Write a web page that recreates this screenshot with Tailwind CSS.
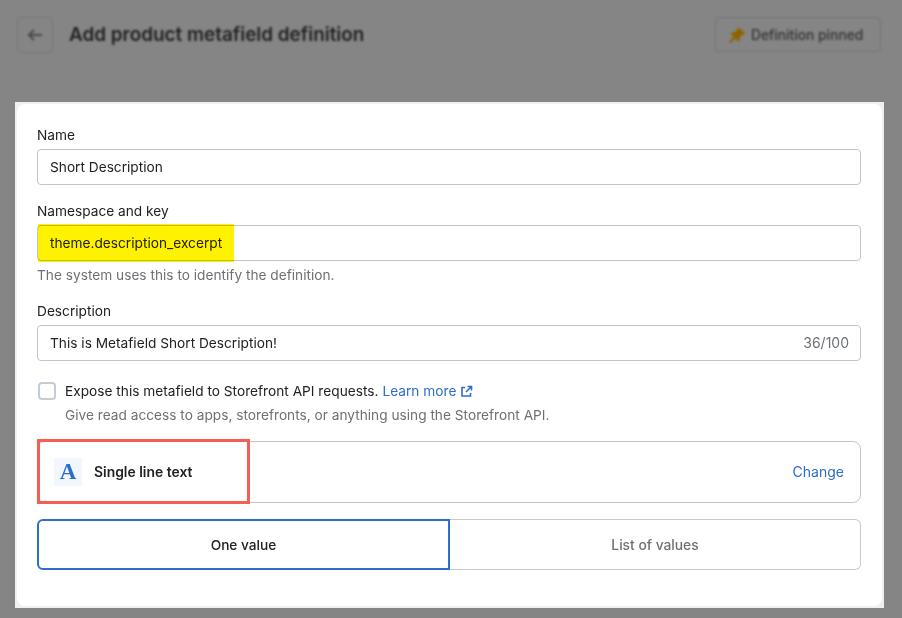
<!DOCTYPE html>
<html lang="en"><head><meta charset="utf-8"><script src="https://cdn.jsdelivr.net/npm/@tailwindcss/browser@4"></script><title>Add product metafield definition</title></head>
<body class="m-0 w-[902px] h-[618px] overflow-hidden bg-[#858585] font-['Inter','Liberation_Sans',sans-serif] text-[13.7px] leading-[20px] text-[#202223]">
<header class="h-[102px] pl-[17px] pr-[21px] pt-[16px] flex items-start justify-between blur-[1px]">
  <div class="flex items-center gap-[16px]">
    <div class="w-[36px] h-[36px] border border-[#777] rounded-[4px] flex items-center justify-center">
      <svg width="20" height="20" viewBox="0 0 20 20" fill="none" stroke="#4a4a4a" stroke-width="2"><path d="M17 10H4M9 5l-5 5 5 5"/></svg>
    </div>
    <h1 class="text-[18.9px] font-semibold text-[#222] leading-[36px] pt-[1px]">Add product metafield definition</h1>
  </div>
  <div class="mt-[1px] w-[166px] h-[35px] border border-[#757575] rounded-[4px] flex items-center gap-[4px] pl-[11px] text-[13.8px] font-medium text-[#333]">
    <svg width="20" height="20" viewBox="0 0 20 20" fill="#8f6200"><path d="M12 3l6 5-1 1.500-2 .2-2.500 3.500.3 2-1.500 1.300-3-3L3.500 18 2 17l4.500-5.500-3-2.800 1.500-1.500 2.200.3L10.500 4.500V3z"/></svg>
    <span>Definition pinned</span>
  </div>
</header>
<main class="relative ml-[15px] w-[869px] h-[506px] bg-[#f0f0f0] pt-[2px] pl-[2px] pr-[2px]">
  <div class="bg-white rounded-[8px] h-[502px] pl-[20px] pr-[21px] pt-[21px]">
    <label class="block h-[24px]">Name</label>
    <div class="h-[36px] border border-[#c4c4c4] rounded-[4px] px-[12px] flex items-center">Short Description</div>
    <label class="block h-[26px] mt-[14px] pt-[2px] leading-[20px]">Namespace and key</label>
    <div class="h-[36px] border border-[#c4c4c4] rounded-[4px] px-[12px] flex items-center">theme.description_excerpt</div>
    <p class="mt-[4px] h-[20px] text-[#6d7175]">The system uses this to identify the definition.</p>
    <label class="block h-[28px] mt-[12px] pt-[4px]">Description</label>
    <div class="h-[36px] border border-[#c4c4c4] rounded-[4px] pl-[12px] pr-[11px] flex items-center justify-between"><span>This is Metafield Short Description!</span><span class="text-[#6d7175] text-[14px]">36/100</span></div>
    <div class="mt-[20px] flex items-start gap-[9px]">
      <div class="ml-[1px] mt-[1px] w-[18px] h-[18px] border-2 border-[#c4cdd5] rounded-[4px] shrink-0"></div>
      <div>
        <p class="flex items-center gap-[4px]"><span>Expose this metafield to Storefront API requests.</span><span class="text-[#2c6ecb]">Learn more</span><svg width="13" height="13" viewBox="0 0 13 13" fill="none" stroke="#2c6ecb" stroke-width="1.6"><path d="M5 2.500H2v8.500h8.500V8M7.500 1.500h4v4M11 2 6 7"/></svg></p>
        <p class="mt-[4px] text-[#6d7175]">Give read access to apps, storefronts, or anything using the Storefront API.</p>
      </div>
    </div>
    <div class="mt-[16px] h-[62px] border border-[#c4c4c4] rounded-[8px] pl-[16px] pr-[16px] flex items-center justify-between">
      <div class="flex items-center gap-[12px]">
        <div class="w-[28px] h-[28px] rounded-[2px] bg-[#f2f7fe] flex items-center justify-center font-['Liberation_Serif',serif] font-bold text-[23px] text-[#2c6ecb]">A</div>
        <span class="font-semibold text-[13.9px]">Single line text</span>
      </div>
      <span class="text-[#2c6ecb] text-[14px]">Change</span>
    </div>
    <div class="mt-[16px] h-[51px] flex">
      <div class="w-[413px] border-2 border-[#2c6ecb] rounded-l-[6px] flex items-center justify-center font-medium text-[13.7px]">One value</div>
      <div class="flex-1 border border-l-0 border-[#c9c9c9] rounded-r-[6px] flex items-center justify-center font-medium text-[13.8px] text-[#6d7175]">List of values</div>
    </div>
  </div>
  <div class="absolute left-[23px] top-[122px] w-[196px] h-[38px] bg-[#fff200] mix-blend-multiply"></div>
  <div class="absolute left-[22px] top-[337px] w-[213px] h-[65px] border-[3px] border-[#f75d52]"></div>
</main>
</body></html>
